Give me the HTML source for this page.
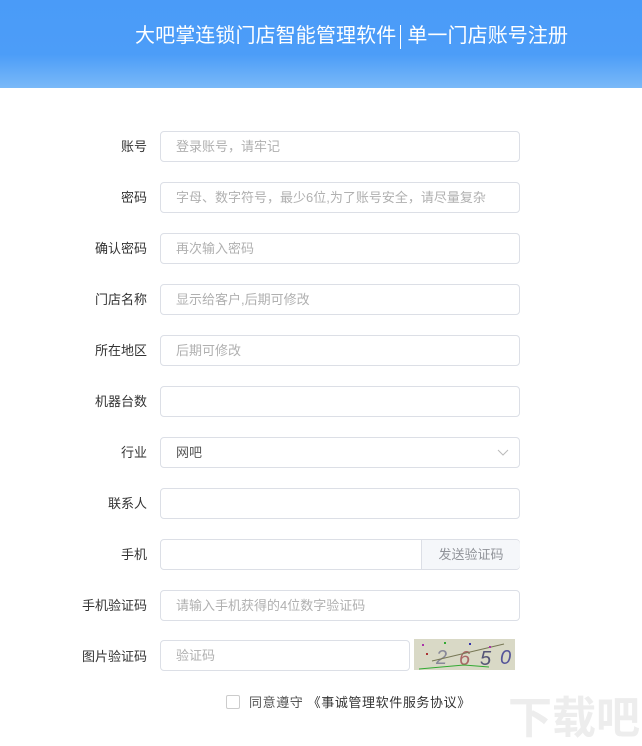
<!DOCTYPE html><html><head><meta charset="utf-8"><style>
body{margin:0;width:642px;height:740px;background:#fff;position:relative;overflow:hidden;font-family:"Liberation Sans","Noto Sans CJK SC",sans-serif;}
.hd{position:absolute;left:0;top:0;width:642px;height:88px;background:linear-gradient(#4a9bf8 0%,#4c9df8 62%,#7ab9f8 100%);}
.t{position:absolute;left:135px;top:19px;color:#fff;font-size:20px;letter-spacing:0.1px;white-space:nowrap;}
.sep{display:inline-block;width:1px;height:24px;background:#fff;vertical-align:middle;margin:0 6px 0 4px;}
.l{position:absolute;right:495px;font-size:13px;color:#333;white-space:nowrap;}
.i{position:absolute;left:160px;width:358px;height:29px;border:1px solid #dcdfe6;border-radius:4px;font-size:13px;color:#b0b0b0;line-height:29px;box-sizing:content-box;}
.i span{padding-left:15px;}
</style></head><body>
<div class="hd"><div class="t">大吧掌连锁门店智能管理软件<span class="sep"></span>单一门店账号注册</div></div>

<div class="l" style="top:136px">账号</div><div class="i" style="top:131px"><span>登录账号，请牢记</span></div>
<div class="l" style="top:187px">密码</div><div class="i" style="top:182px"><span>字母、数字符号，最少6位,为了账号安全，请尽量复杂</span></div>
<div class="l" style="top:238px">确认密码</div><div class="i" style="top:233px"><span>再次输入密码</span></div>
<div class="l" style="top:289px">门店名称</div><div class="i" style="top:284px"><span>显示给客户,后期可修改</span></div>
<div class="l" style="top:340px">所在地区</div><div class="i" style="top:335px"><span>后期可修改</span></div>
<div class="l" style="top:391px">机器台数</div><div class="i" style="top:386px"></div>
<div class="l" style="top:442px">行业</div><div class="i" style="top:437px;color:#555"><span>网吧</span>
<svg style="position:absolute;right:10px;top:11px" width="12" height="8"><path d="M1 1L6 6L11 1" fill="none" stroke="#bbb" stroke-width="1"/></svg></div>
<div class="l" style="top:493px">联系人</div><div class="i" style="top:488px"></div>
<div class="l" style="top:544px">手机</div><div class="i" style="top:539px"><div style="position:absolute;left:260px;top:0;width:98px;height:29px;background:#f5f7fa;border-left:1px solid #dcdfe6;border-radius:0 4px 4px 0;color:#909399;text-align:center">发送验证码</div></div>
<div class="l" style="top:595px">手机验证码</div><div class="i" style="top:590px"><span>请输入手机获得的4位数字验证码</span></div>
<div class="l" style="top:646px">图片验证码</div><div class="i" style="top:640px;width:248px"><span>验证码</span></div>
<svg style="position:absolute;left:414px;top:639px" width="101" height="31"><rect width="101" height="31" fill="#d9d9c6"/>
<g font-family="Liberation Sans" font-style="italic" font-size="20"><text x="22" y="25" fill="#889">2</text><text x="45" y="26" fill="#a66">6</text><text x="66" y="26" fill="#557">5</text><text x="86" y="25" fill="#559">0</text></g>
<path d="M18 22L90 5" stroke="#775" fill="none"/><path d="M5 30L50 26L75 28" stroke="#3a3" fill="none"/>
<g fill="#a3a"><rect x="8" y="5" width="2" height="2"/><rect x="30" y="3" width="2" height="2" fill="#3a3"/><rect x="55" y="4" width="2" height="2" fill="#33a"/><rect x="75" y="7" width="2" height="2"/><rect x="12" y="14" width="2" height="2" fill="#a33"/></g></svg>
<div style="position:absolute;left:226px;top:695px;width:12px;height:12px;border:1px solid #ccc;border-radius:2px"></div>
<div style="position:absolute;left:249px;top:692px;font-size:13px;letter-spacing:0.6px;color:#555;white-space:nowrap">同意遵守 <span style="color:#333">《事诚管理软件服务协议》</span></div>
<div style="position:absolute;left:508px;top:682px;font-size:44px;color:#ededed;font-weight:bold;white-space:nowrap">下载吧</div>
</body></html>
